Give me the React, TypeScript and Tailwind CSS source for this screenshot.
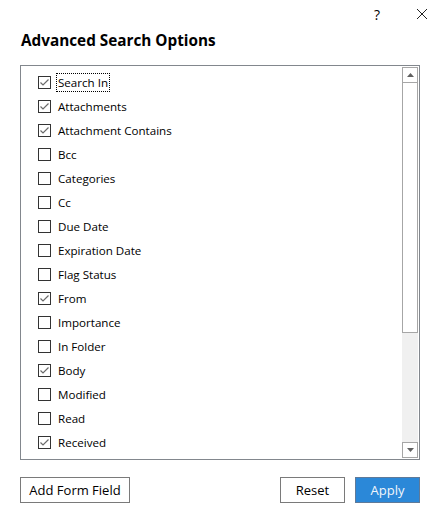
const items: { label: string; checked: boolean }[] = [
  { label: "Search In", checked: true },
  { label: "Attachments", checked: true },
  { label: "Attachment Contains", checked: true },
  { label: "Bcc", checked: false },
  { label: "Categories", checked: false },
  { label: "Cc", checked: false },
  { label: "Due Date", checked: false },
  { label: "Expiration Date", checked: false },
  { label: "Flag Status", checked: false },
  { label: "From", checked: true },
  { label: "Importance", checked: false },
  { label: "In Folder", checked: false },
  { label: "Body", checked: true },
  { label: "Modified", checked: false },
  { label: "Read", checked: false },
  { label: "Received", checked: true },
];

const CheckBox = ({ checked }: { checked: boolean }) => (
  <div className="w-[13px] h-[13px] border border-[#333333] bg-white flex items-center justify-center shrink-0">
    {checked && (
      <svg width="11" height="11" viewBox="0 0 11 11">
        <path d="M1.5 5.5 L4 8 L9.5 2.5" fill="none" stroke="#6b6b6b" strokeWidth="1.2" />
      </svg>
    )}
  </div>
);

const App = () => {
  return (
    <div
      className="w-[438px] h-[519px] bg-white flex flex-col text-black"
      style={{ fontFamily: '"Open Sans", "Noto Sans", sans-serif' }}
    >
      <div className="h-[28px] flex flex-row justify-end items-center pr-[10px]">
        <span className="text-[14px] mr-[36px]">?</span>
        <svg width="12" height="12" viewBox="0 0 12 12">
          <path d="M1 1 L11 11 M11 1 L1 11" stroke="#222" strokeWidth="1" />
        </svg>
      </div>
      <div className="pl-[21px] pt-[1px] h-[37px] text-[15.3px] font-bold leading-[22px]">
        Advanced Search Options
      </div>
      <div className="ml-[20px] w-[400px] h-[395px] border border-[#82878d] flex flex-row">
        <div className="flex-1 flex flex-col pt-[4px] pl-[17px]">
          {items.map((item, i) => (
            <div key={item.label} className="h-[24px] flex flex-row items-center gap-[5px]">
              <CheckBox checked={item.checked} />
              <span
                className={
                  "text-[11.6px] leading-[17px] px-[1px] " +
                  (i === 0 ? "border border-dotted border-black" : "border border-transparent")
                }
              >
                {item.label}
              </span>
            </div>
          ))}
        </div>
        <div className="w-[16px] mr-[1px] my-[1px] flex flex-col">
          <div className="h-[16px] border border-[#a6a6a6] flex items-center justify-center">
            <svg width="7" height="4" viewBox="0 0 7 4">
              <path d="M0 4 L3.5 0 L7 4 Z" fill="#606060" />
            </svg>
          </div>
          <div className="h-[250px] border border-t-0 border-[#a6a6a6] bg-white" />
          <div className="flex-1 bg-[#f0f0f0]" />
          <div className="h-[16px] border border-[#a6a6a6] flex items-center justify-center">
            <svg width="7" height="4" viewBox="0 0 7 4">
              <path d="M0 0 L7 0 L3.5 4 Z" fill="#606060" />
            </svg>
          </div>
        </div>
      </div>
      <div className="flex flex-row items-center mt-[17px] pl-[20px] pr-[18px]">
        <button className="w-[110px] h-[26px] border border-[#7a7a7a] bg-white text-[13px] leading-none">
          Add Form Field
        </button>
        <div className="flex-1" />
        <button className="w-[65px] h-[26px] border border-[#7a7a7a] bg-white text-[13px] leading-none">
          Reset
        </button>
        <button className="w-[65px] h-[26px] ml-[10px] border border-[#5f7a99] bg-[#2b88d8] text-[#f2f6fb] text-[13px] leading-none">
          Apply
        </button>
      </div>
    </div>
  );
};

export default App;
